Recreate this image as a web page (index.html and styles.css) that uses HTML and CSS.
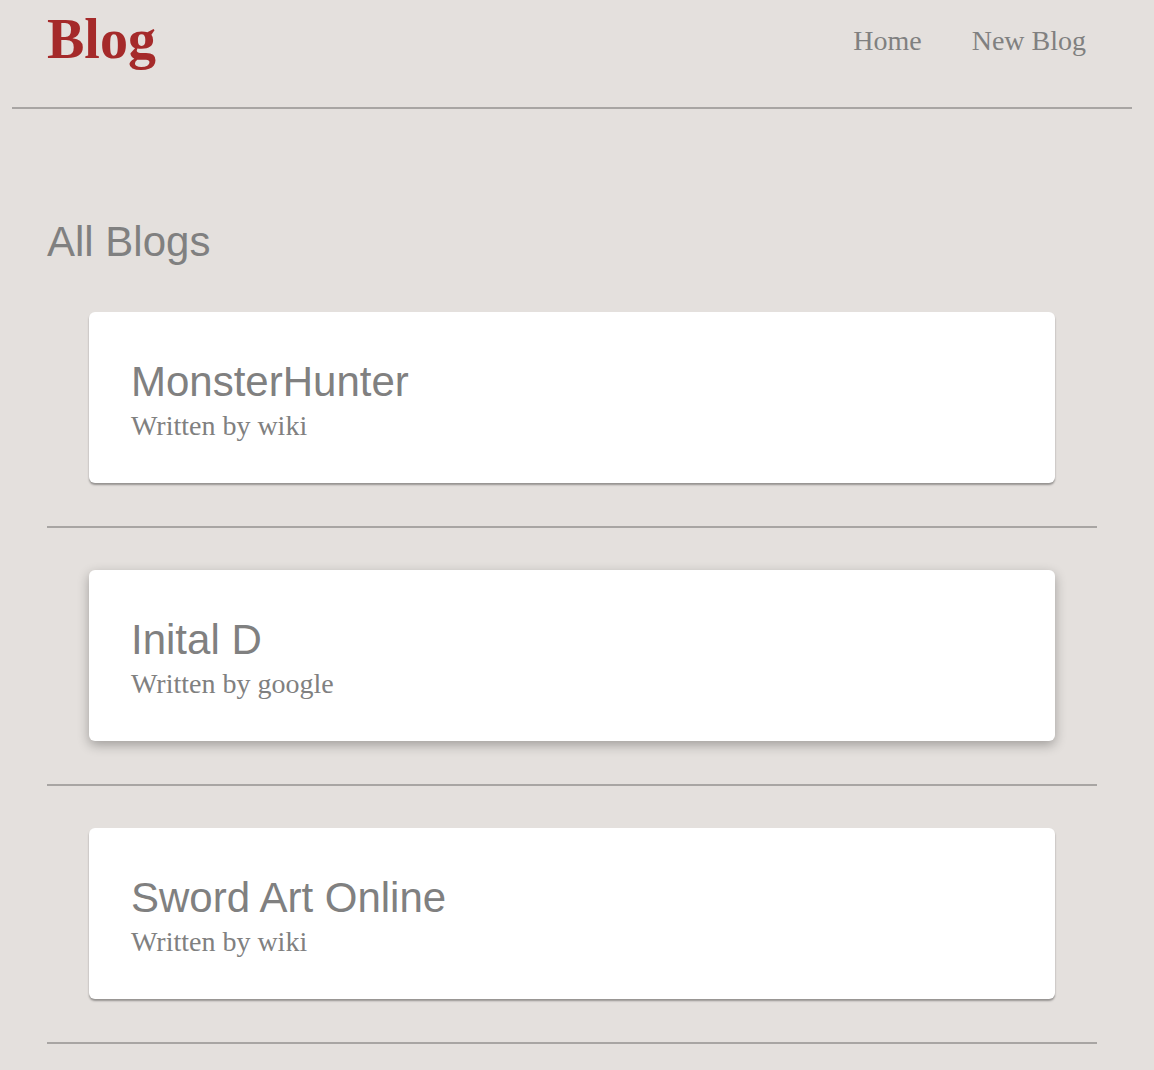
FILE: index.html
```html
<!DOCTYPE html>
<html lang="en">
<head>
<meta charset="utf-8">
<title>Blog</title>
<link rel="stylesheet" href="styles.css">
</head>
<body>
<header class="site-header">
  <h1 class="brand">Blog</h1>
  <nav class="nav">
    <a href="#" class="nav-link">Home</a>
    <a href="#" class="nav-link">New Blog</a>
  </nav>
</header>
<main class="content">
  <h2 class="page-title">All Blogs</h2>
  <div class="blog-item">
    <a href="#" class="card">
      <h3 class="card-title">MonsterHunter</h3>
      <p class="card-author">Written by wiki</p>
    </a>
    <hr class="divider">
  </div>
  <div class="blog-item">
    <a href="#" class="card card-raised">
      <h3 class="card-title">Inital D</h3>
      <p class="card-author">Written by google</p>
    </a>
    <hr class="divider">
  </div>
  <div class="blog-item">
    <a href="#" class="card">
      <h3 class="card-title">Sword Art Online</h3>
      <p class="card-author">Written by wiki</p>
    </a>
    <hr class="divider">
  </div>
</main>
</body>
</html>
```
FILE: styles.css
```css
html, body {
  margin: 0;
  padding: 0;
  background: #e4e0dd;
}
body {
  font-family: "Liberation Serif", "Times New Roman", serif;
  color: #808080;
  overflow: hidden;
}
.site-header {
  margin: 0 22px 0 12px;
  padding: 7px 46px 36px 35px;
  display: flex;
  justify-content: space-between;
  align-items: flex-start;
  border-bottom: 2px solid #a8a5a3;
}
.brand {
  margin: 0;
  font-size: 56px;
  line-height: 64px;
  font-weight: bold;
  color: #a52a2a;
}
.nav {
  display: flex;
  gap: 50px;
  padding-top: 18px;
}
.nav-link {
  font-size: 28px;
  line-height: 32px;
  color: #808080;
  text-decoration: none;
}
.content {
  margin: 0 57px 0 47px;
  padding-top: 109px;
}
.page-title {
  margin: 0 0 46px;
  font-family: "Liberation Sans", Arial, sans-serif;
  font-weight: normal;
  font-size: 42px;
  line-height: 48px;
  color: #808080;
}
.card {
  display: block;
  margin: 0 42px 43px;
  padding: 46px 42px 41px;
  background: #ffffff;
  border-radius: 6px;
  box-shadow: 0 2px 2px rgba(0, 0, 0, 0.35);
  text-decoration: none;
}
.card-raised {
  box-shadow: 0 4px 12px rgba(0, 0, 0, 0.3);
}
.card-title {
  margin: 0 0 4px;
  font-family: "Liberation Sans", Arial, sans-serif;
  font-weight: normal;
  font-size: 42px;
  line-height: 48px;
  color: #808080;
}
.card-author {
  margin: 0;
  font-size: 28px;
  line-height: 32px;
  color: #808080;
}
.divider {
  margin: 0 0 42px;
  border: 0;
  border-top: 2px solid #a8a5a3;
  height: 0;
}
```
